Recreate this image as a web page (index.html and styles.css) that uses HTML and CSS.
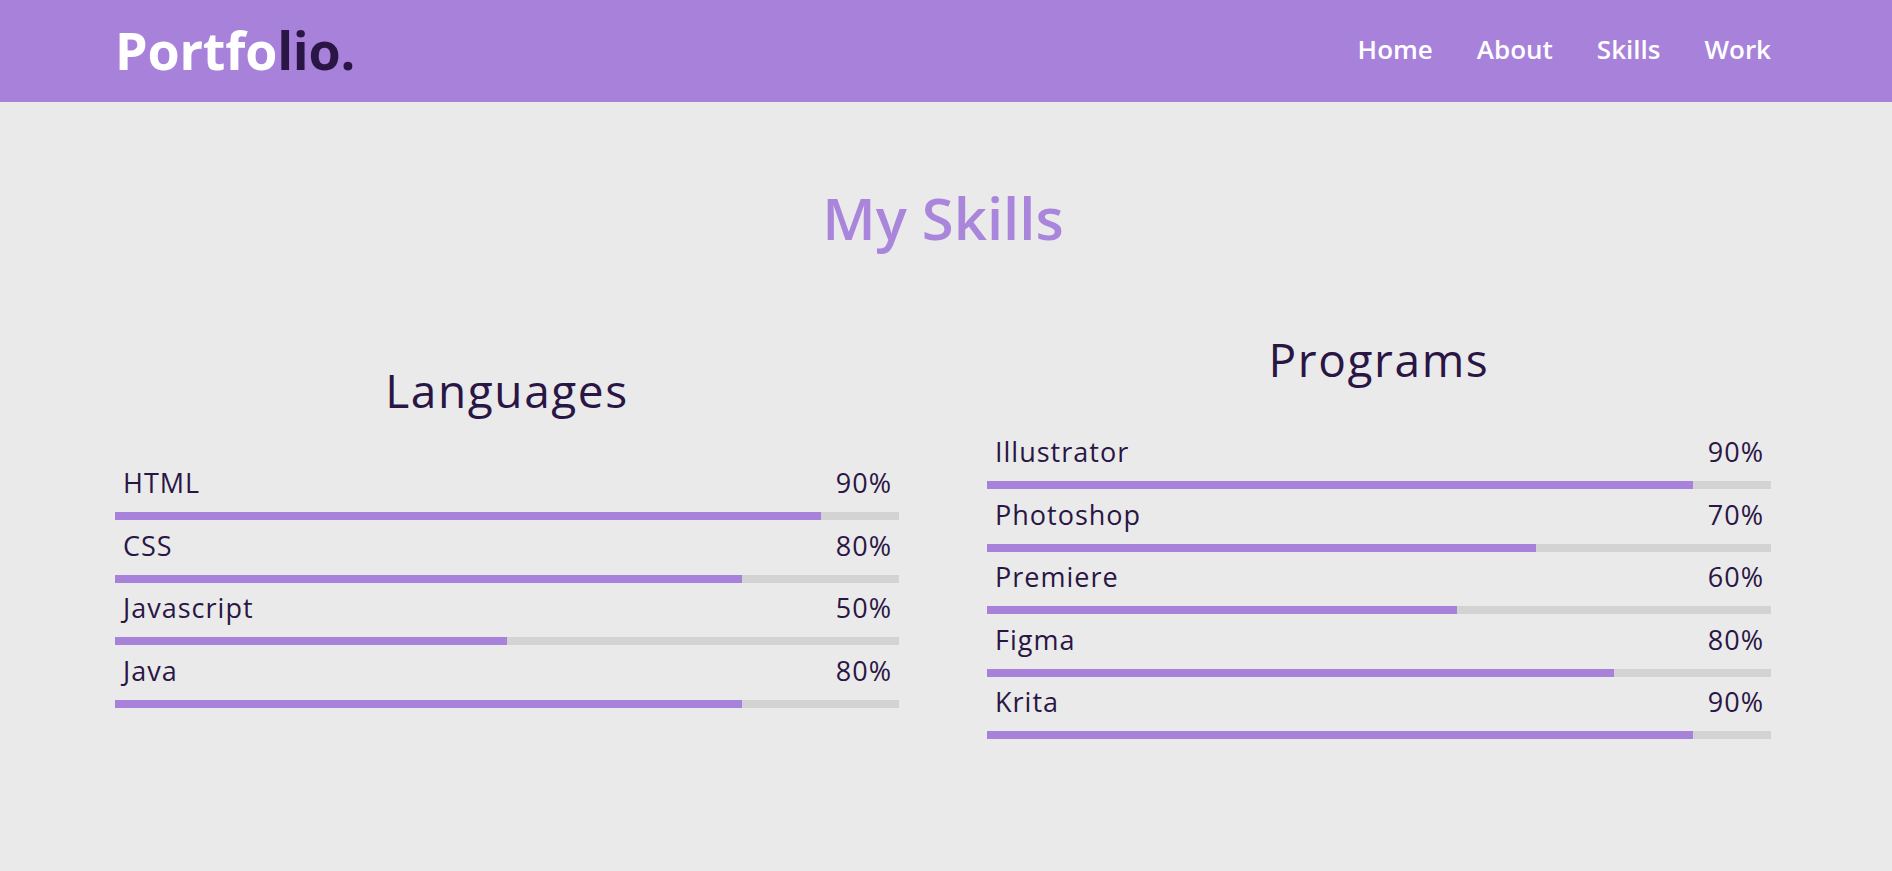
FILE: index.html
```html
<!DOCTYPE html>
<html lang="en">
<head>
<meta charset="utf-8">
<title>Portfolio - Skills</title>
<link rel="stylesheet" href="styles.css">
</head>
<body>
<header class="site-header">
  <div class="header-inner">
    <a class="logo" href="#">Portfo<span class="logo-dark">lio.</span></a>
    <nav class="nav">
      <a href="#">Home</a>
      <a href="#">About</a>
      <a href="#">Skills</a>
      <a href="#">Work</a>
    </nav>
  </div>
</header>
<main class="skills">
  <h1 class="skills-title">My Skills</h1>
  <div class="skills-columns">
    <section class="skill-col">
      <h2 class="col-title">Languages</h2>
      <div class="skill"><div class="skill-info"><span>HTML</span><span>90%</span></div><div class="track"><div class="fill" style="width:90%"></div></div></div>
      <div class="skill"><div class="skill-info"><span>CSS</span><span>80%</span></div><div class="track"><div class="fill" style="width:80%"></div></div></div>
      <div class="skill"><div class="skill-info"><span>Javascript</span><span>50%</span></div><div class="track"><div class="fill" style="width:50%"></div></div></div>
      <div class="skill"><div class="skill-info"><span>Java</span><span>80%</span></div><div class="track"><div class="fill" style="width:80%"></div></div></div>
    </section>
    <section class="skill-col">
      <h2 class="col-title">Programs</h2>
      <div class="skill"><div class="skill-info"><span>Illustrator</span><span>90%</span></div><div class="track"><div class="fill" style="width:90%"></div></div></div>
      <div class="skill"><div class="skill-info"><span>Photoshop</span><span>70%</span></div><div class="track"><div class="fill" style="width:70%"></div></div></div>
      <div class="skill"><div class="skill-info"><span>Premiere</span><span>60%</span></div><div class="track"><div class="fill" style="width:60%"></div></div></div>
      <div class="skill"><div class="skill-info"><span>Figma</span><span>80%</span></div><div class="track"><div class="fill" style="width:80%"></div></div></div>
      <div class="skill"><div class="skill-info"><span>Krita</span><span>90%</span></div><div class="track"><div class="fill" style="width:90%"></div></div></div>
    </section>
  </div>
</main>
</body>
</html>
```
FILE: styles.css
```css
* { box-sizing: border-box; }

html, body {
  margin: 0;
  padding: 0;
}

body {
  background: #eaeaea;
  color: #2a1645;
  font-family: "Open Sans", "Noto Sans", sans-serif;
  min-height: 871px;
}

a { text-decoration: none; color: inherit; }

.site-header {
  background: #a882da;
  height: 102px;
}

.header-inner {
  margin-left: 115px;
  width: 1656px;
  height: 100%;
  padding-bottom: 5px;
  display: flex;
  align-items: center;
  justify-content: space-between;
}

.logo {
  font-family: "Open Sans", sans-serif;
  font-weight: 700;
  font-size: 52px;
  line-height: 1;
  color: #ffffff;
  letter-spacing: -0.2px;
  padding-top: 2px;
}

.logo-dark { color: #2a1645; }

.nav {
  display: flex;
  gap: 44px;
}

.nav a {
  font-family: "Open Sans", sans-serif;
  font-weight: 600;
  font-size: 26px;
  line-height: 1;
  color: #ffffff;
}

.skills {
  margin-left: 115px;
  width: 1656px;
}

.skills-title {
  margin: 87px 0 0;
  text-align: center;
  font-family: "Open Sans", sans-serif;
  font-weight: 600;
  font-size: 58px;
  line-height: 58px;
  color: #a985db;
}

.skills-columns {
  margin-top: 89px;
  display: flex;
  align-items: center;
  gap: 88px;
}

.skill-col {
  width: 784px;
  display: flex;
  flex-direction: column;
}

.col-title {
  margin: 0 0 56px;
  text-align: center;
  font-family: "Open Sans", sans-serif;
  font-weight: 400;
  font-size: 46px;
  line-height: 46px;
  letter-spacing: 1.6px;
  color: #2a1645;
}

.skill {
  display: flex;
  flex-direction: column;
  padding-bottom: 11.5px;
}

.skill-info {
  display: flex;
  justify-content: space-between;
  padding: 0 7px 0 8px;
  font-size: 27px;
  line-height: 28px;
  letter-spacing: 1px;
  margin-bottom: 15px;
}

.track {
  height: 8px;
  background: #d3d3d3;
}

.fill {
  height: 100%;
  background: #a882da;
}
```
